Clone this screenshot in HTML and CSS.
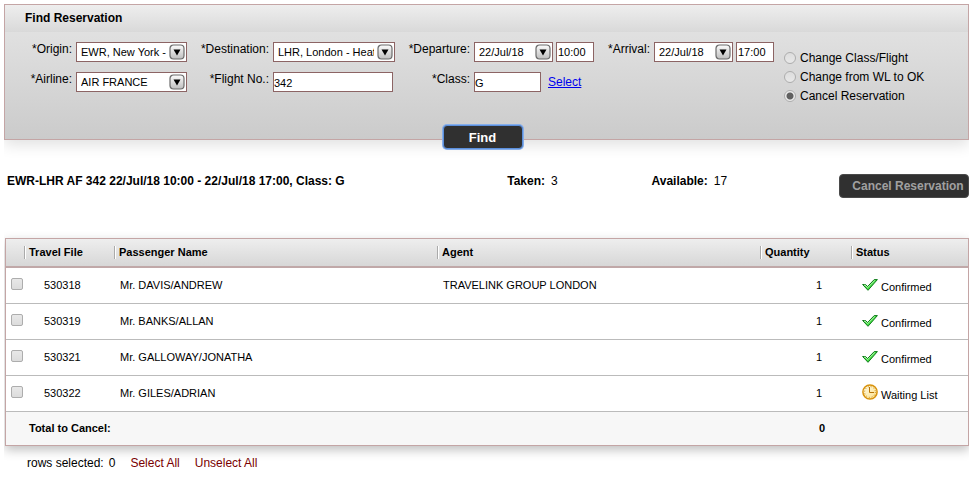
FILE: index.html
```html
<!DOCTYPE html>
<html lang="en">
<head>
    <meta charset="UTF-8">
    <meta name="viewport" content="width=device-width, initial-scale=1.0">
    <title>Find Reservation</title>
    <link rel="stylesheet" href="styles.css">
</head>
<body>
    <!-- Shared icons -->
    <svg class="icon-defs" aria-hidden="true">
        <defs>
            <linearGradient id="arrowFill" x1="0" y1="0" x2="0" y2="1">
                <stop offset="0" stop-color="#fdfdfd"/>
                <stop offset="1" stop-color="#bdbdbd"/>
            </linearGradient>
            <linearGradient id="clockFill" x1="0" y1="0" x2="1" y2="1">
                <stop offset="0" stop-color="#fffbe6"/>
                <stop offset="1" stop-color="#fbe08a"/>
            </linearGradient>
        </defs>
        <symbol id="arrow" viewBox="0 0 16 16">
            <rect x="1" y="1" width="14" height="14" rx="3.5" fill="url(#arrowFill)" stroke="#6b6b6b" stroke-width="1.2"/>
            <path d="M4.5 5.5h7L8 11.5z" fill="#000"/>
        </symbol>
        <symbol id="check" viewBox="0 0 16 12">
            <path d="M.6 5.5h2.8l2.2 2L12.2.6h3.2L6 11.3z" fill="#3fdc3f" stroke="#117a1c" stroke-width="1"/>
            <path d="M2 6.2h1l2.6 2.4L12.8 1.5" fill="none" stroke="#b4f7b0" stroke-width="1"/>
        </symbol>
        <symbol id="clock" viewBox="0 0 16 16">
            <circle cx="8" cy="8" r="7.1" fill="url(#clockFill)" stroke="#d8920c" stroke-width="1.5"/>
            <circle cx="8" cy="8" r="5.4" fill="none" stroke="#c98a1a" stroke-width="1" stroke-dasharray="1 1.83"/>
            <path d="M7.5 3v5.5H12" fill="none" stroke="#b87408" stroke-width="1"/>
        </symbol>
    </svg>

    <form class="search-panel">
        <h1 class="panel-title">Find Reservation</h1>
        <div class="panel-body">
            <div class="fields">
                <label for="origin">*Origin:</label>
                <div class="select-box">
                    <select id="origin"><option>EWR, New York - Newark</option></select>
                    <svg class="arrow"><use href="#arrow"/></svg>
                </div>
                <label for="destination">*Destination:</label>
                <div class="select-box">
                    <select id="destination"><option>LHR, London - Heathrow</option></select>
                    <svg class="arrow"><use href="#arrow"/></svg>
                </div>
                <label for="departure">*Departure:</label>
                <div class="date-time">
                    <div class="select-box">
                        <select id="departure"><option>22/Jul/18</option></select>
                        <svg class="arrow"><use href="#arrow"/></svg>
                    </div>
                    <input class="time" type="text" value="10:00" aria-label="Departure time">
                </div>
                <label for="arrival">*Arrival:</label>
                <div class="date-time">
                    <div class="select-box">
                        <select id="arrival"><option>22/Jul/18</option></select>
                        <svg class="arrow"><use href="#arrow"/></svg>
                    </div>
                    <input class="time" type="text" value="17:00" aria-label="Arrival time">
                </div>

                <label for="airline">*Airline:</label>
                <div class="select-box">
                    <select id="airline"><option>AIR FRANCE</option></select>
                    <svg class="arrow"><use href="#arrow"/></svg>
                </div>
                <label for="flight">*Flight No.:</label>
                <div><input class="flight" id="flight" type="text" value="342"></div>
                <label for="class">*Class:</label>
                <div class="class-field">
                    <input class="class-code" id="class" type="text" value="G">
                    <a href="#">Select</a>
                </div>
            </div>
            <div class="actions">
                <label><input type="radio" name="action">Change Class/Flight</label>
                <label><input type="radio" name="action">Change from WL to OK</label>
                <label><input type="radio" name="action" checked>Cancel Reservation</label>
            </div>
        </div>
    </form>
    <div class="find-row">
        <button type="button" class="btn btn-find">Find</button>
    </div>

    <div class="summary">
        <strong>EWR-LHR AF 342 22/Jul/18 10:00 - 22/Jul/18 17:00, Class: G</strong>
        <div class="count"><strong>Taken:</strong><span>3</span></div>
        <div class="count"><strong>Available:</strong><span>17</span></div>
        <button type="button" class="btn btn-cancel" disabled>Cancel Reservation</button>
    </div>

    <div class="table-container">
        <table>
            <colgroup>
                <col class="col-check">
                <col class="col-file">
                <col>
                <col>
                <col class="col-quantity">
                <col class="col-status">
            </colgroup>
            <thead>
                <tr>
                    <th></th>
                    <th><span>Travel File</span></th>
                    <th><span>Passenger Name</span></th>
                    <th><span>Agent</span></th>
                    <th><span>Quantity</span></th>
                    <th><span>Status</span></th>
                </tr>
            </thead>
            <tbody>
                <tr>
                    <td class="check"><input type="checkbox" aria-label="Select 530318"></td>
                    <td class="file">530318</td>
                    <td>Mr. DAVIS/ANDREW</td>
                    <td>TRAVELINK GROUP LONDON</td>
                    <td class="quantity">1</td>
                    <td><div class="status"><svg class="icon-check"><use href="#check"/></svg><span>Confirmed</span></div></td>
                </tr>
                <tr>
                    <td class="check"><input type="checkbox" aria-label="Select 530319"></td>
                    <td class="file">530319</td>
                    <td>Mr. BANKS/ALLAN</td>
                    <td></td>
                    <td class="quantity">1</td>
                    <td><div class="status"><svg class="icon-check"><use href="#check"/></svg><span>Confirmed</span></div></td>
                </tr>
                <tr>
                    <td class="check"><input type="checkbox" aria-label="Select 530321"></td>
                    <td class="file">530321</td>
                    <td>Mr. GALLOWAY/JONATHA</td>
                    <td></td>
                    <td class="quantity">1</td>
                    <td><div class="status"><svg class="icon-check"><use href="#check"/></svg><span>Confirmed</span></div></td>
                </tr>
                <tr>
                    <td class="check"><input type="checkbox" aria-label="Select 530322"></td>
                    <td class="file">530322</td>
                    <td>Mr. GILES/ADRIAN</td>
                    <td></td>
                    <td class="quantity">1</td>
                    <td><div class="status"><svg class="icon-clock"><use href="#clock"/></svg><span>Waiting List</span></div></td>
                </tr>
            </tbody>
            <tfoot>
                <tr>
                    <td></td>
                    <td class="total-label" colspan="3">Total to Cancel:</td>
                    <td class="total">0</td>
                    <td></td>
                </tr>
            </tfoot>
        </table>
    </div>

    <div class="selection">
        <span>rows selected:</span>
        <span class="selected-count">0</span>
        <a href="#">Select All</a>
        <a href="#">Unselect All</a>
    </div>
</body>
</html>
```
FILE: styles.css
```css
* {
    box-sizing: border-box;
}

body {
    margin: 4px 5px 0 4px;
    background-color: #fff;
    color: #000;
    font-family: "Liberation Sans", Arial, sans-serif;
    font-size: 12px;
    line-height: 14px;
}

input, select, button {
    margin: 0;
    font-family: inherit;
    color: #000;
}

.icon-defs {
    position: absolute;
    width: 0;
    height: 0;
}

/* Search panel */
.search-panel {
    min-height: 136px;
    border: 1px solid #c4a5a5;
    background: linear-gradient(#e6e6e6, #cbcbcb);
    box-shadow: 0 5px 14px rgba(0, 0, 0, 0.12);
}

.panel-title {
    margin: 0;
    padding: 6px 20px 7px;
    background: linear-gradient(#eeeeee, #d9d9d9);
    font-size: 12px;
    line-height: 14px;
}

.panel-body {
    display: flex;
    align-items: flex-start;
    gap: 10px;
    padding-top: 10px;
}

.fields {
    display: grid;
    grid-template-columns: 67px 111px 78px 122px 71px 120px 52px 120px;
    gap: 10px 4px;
    align-items: start;
}

.fields > label {
    text-align: right;
}

.select-box {
    position: relative;
}

.select-box select {
    display: block;
    appearance: none;
    width: 100%;
    height: 20px;
    padding: 0 20px 0 4px;
    border: 1px solid #8c6464;
    border-radius: 0;
    background-color: #fff;
    font-size: 11px;
}

/* Arrow button over the right end of the select */
.arrow {
    position: absolute;
    top: 2px;
    right: 2px;
    width: 16px;
    height: 16px;
    pointer-events: none;
}

.date-time {
    display: flex;
    gap: 3px;
}

.date-time .select-box {
    flex: 1;
}

.fields input {
    display: block;
    height: 20px;
    padding: 2px 0 0;
    border: 1px solid #8c6464;
    background-color: #fff;
    font-size: 11px;
}

.fields .time {
    width: 38px;
    padding: 0 1px;
}

.fields .flight {
    width: 120px;
}

.class-field {
    display: flex;
    align-items: center;
    gap: 7px;
}

.fields .class-code {
    width: 67px;
}

.class-field a {
    color: #0000ee;
}

.actions {
    padding-top: 6px;
}

.actions label {
    display: flex;
    align-items: center;
    gap: 4px;
    height: 19px;
    white-space: nowrap;
}

.actions input {
    appearance: none;
    width: 12px;
    height: 12px;
    border: 1px solid #adadad;
    border-radius: 50%;
    background: linear-gradient(#dddddd, #e8e8e8);
}

.actions input:checked {
    background: radial-gradient(circle, #606060 3px, #ebebeb 4px);
}

/* Buttons */
.btn {
    height: 24px;
    border: 1px solid #4a4a4a;
    border-radius: 4px;
    background-color: #303030;
    color: #fff;
    font-weight: bold;
}

.find-row {
    display: flex;
    justify-content: center;
    margin-top: -15px;
    padding-right: 8px;
}

.btn-find {
    position: relative;
    width: 80px;
    border-color: #5b8fdc;
    box-shadow: 0 0 0 1px #86aeea;
    font-size: 13px;
}

.btn-cancel {
    width: 130px;
    padding: 0 4px 0 12px;
    color: #a0a0a0;
    font-size: 12px;
    white-space: nowrap;
}

/* Booking summary */
.summary {
    display: grid;
    grid-template-columns: 52% 15% 1fr auto;
    align-items: start;
    margin-top: 25px;
    padding-left: 3px;
}

.count {
    display: flex;
    gap: 6px;
}

.summary > strong,
.count {
    white-space: nowrap;
}

/* Passenger table */
.table-container {
    margin: 40px 0 0 1px;
    border: 1px solid #c4a5a5;
    box-shadow: 0 4px 10px rgba(0, 0, 0, 0.25);
}

table {
    width: 100%;
    table-layout: fixed;
    border-collapse: collapse;
    background-color: #fff;
    font-size: 11px;
    line-height: 13px;
}

.col-check {
    width: 18px;
}

.col-file {
    width: 90px;
}

.col-quantity {
    width: 91px;
}

.col-status {
    width: 117px;
}

thead {
    background: linear-gradient(#eeeeee, #d6d6d6);
}

th {
    height: 28px;
    padding: 0;
    border-bottom: 2px solid #c0a8a8;
    text-align: left;
}

th span {
    display: block;
    padding-left: 4px;
    border-left: 1px solid #aaaaaa;
    box-shadow: inset 1px 0 #fff;
}

td {
    height: 36px;
    padding: 0 6px;
    border-bottom: 1px solid #bbbbbb;
}

.check {
    padding: 0 0 2px 5px;
}

.check input {
    display: block;
    appearance: none;
    width: 12px;
    height: 12px;
    border: 1px solid #adadad;
    border-radius: 2px;
    background: linear-gradient(#e8e8e8, #dcdcdc);
}

.file {
    padding: 0 20px;
}

.quantity {
    padding-right: 29px;
    text-align: right;
}

.status {
    display: flex;
    align-items: center;
    gap: 3px;
    padding: 4px 0 0 5px;
}

.status svg {
    flex: none;
    width: 16px;
}

.icon-check {
    height: 12px;
    margin-bottom: 4px;
}

.icon-clock {
    height: 16px;
    margin-bottom: 6px;
}

tfoot td {
    height: 34px;
    border-bottom: 0;
    background-color: #f7f7f7;
    font-weight: bold;
}

.total-label {
    padding-left: 5px;
}

.total {
    padding-right: 26px;
    text-align: right;
}

/* Row selection */
.selection {
    display: flex;
    margin-top: 10px;
    padding-left: 23px;
}

.selection a {
    margin-left: 15px;
    color: #7a0000;
    text-decoration: none;
}

.selected-count {
    margin-left: 5px;
}
```
